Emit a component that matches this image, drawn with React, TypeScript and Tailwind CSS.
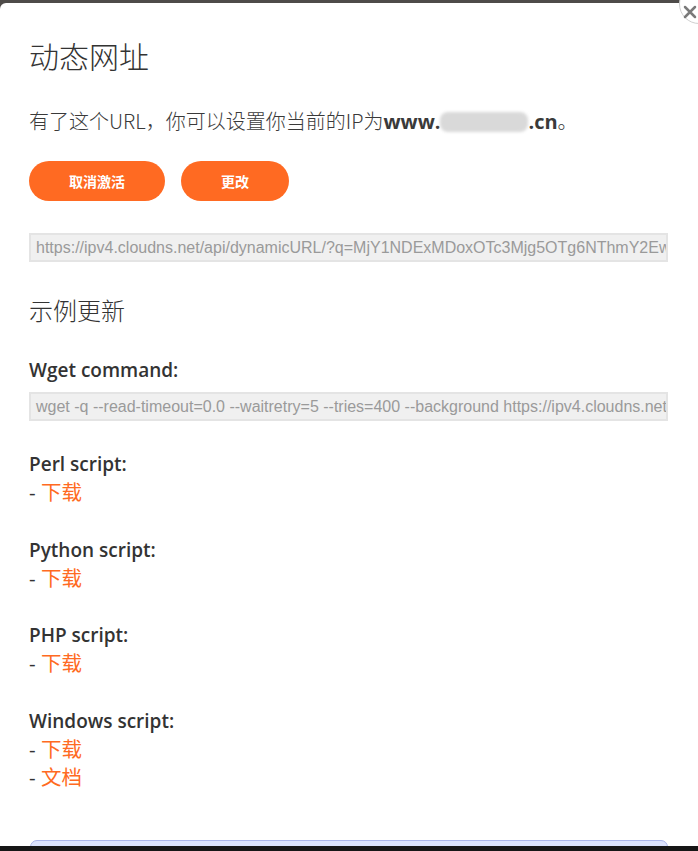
import React from "react";

const font = { fontFamily: '"Open Sans", "Noto Sans CJK SC", sans-serif' };

function Item({ label, links }: { label: string; links: string[] }) {
  return (
    <div className="mt-[29px]">
      <div className="text-[19px] leading-[28px] font-semibold text-[#333]">{label}</div>
      {links.map((l) => (
        <div key={l} className="text-[20.5px] leading-[27.5px] text-[#333]">
          - <span className="text-[#ff6a22]" style={{ fontFamily: '"Noto Sans CJK SC", sans-serif' }}>{l}</span>
        </div>
      ))}
    </div>
  );
}

export default function App() {
  return (
    <div className="relative h-[851px] w-[698px] overflow-hidden bg-[#4e4b49]" style={font}>
      <div className="mt-[3px] h-[843px] overflow-hidden rounded-tl-[6px] bg-white pl-[29px] pr-[30px] pt-[34px]">
        <h1 className="text-[30px] leading-[36px] text-[#333] font-light" style={{ fontFamily: '"Noto Sans CJK SC", sans-serif' }}>
          动态网址
        </h1>
        <p className="mt-[34px] text-[20px] leading-[28px] text-[#3a3a3a] font-light" style={{ fontFamily: '"Noto Sans CJK SC", sans-serif' }}>
          有了这个URL，你可以设置你当前的IP为
          <span className="font-bold" style={{ fontFamily: '"Open Sans", sans-serif' }}>www.</span>
          <span className="inline-block h-[20px] w-[88px] translate-y-[3px] rounded-[8px] bg-[#d9d9d9] blur-[1.5px]" />
          <span className="font-bold" style={{ fontFamily: '"Open Sans", sans-serif' }}>.cn</span>。
        </p>
        <div className="mt-[25px] flex gap-[16px]">
          <button className="h-[40px] w-[136px] rounded-full bg-[#ff6a22] text-[14px] font-bold text-white" style={{ fontFamily: '"Noto Sans CJK SC", sans-serif' }}>
            取消激活
          </button>
          <button className="h-[40px] w-[108px] rounded-full bg-[#ff6a22] text-[14px] font-bold text-white" style={{ fontFamily: '"Noto Sans CJK SC", sans-serif' }}>
            更改
          </button>
        </div>
        <div
          className="mt-[32px] h-[29px] overflow-hidden whitespace-nowrap border-2 border-[#e4e4e4] bg-[#f0f0f0] pl-[5px] text-[16px] leading-[25px] text-[#9a9a9a]"
          style={{ fontFamily: '"Liberation Sans", Arial, sans-serif' }}
        >
          https://ipv4.cloudns.net/api/dynamicURL/?q=MjY1NDExMDoxOTc3Mjg5OTg6NThmY2EwYjQ5
        </div>
        <h2 className="mt-[33px] text-[24px] leading-[30px] text-[#333] font-light" style={{ fontFamily: '"Noto Sans CJK SC", sans-serif' }}>
          示例更新
        </h2>
        <div className="mt-[32px] text-[19px] leading-[26px] font-semibold text-[#333]">Wget command:</div>
        <div
          className="mt-[9px] h-[29px] overflow-hidden whitespace-nowrap border-2 border-[#e4e4e4] bg-[#f0f0f0] pl-[5px] text-[16px] leading-[25px] text-[#9a9a9a]"
          style={{ fontFamily: '"Liberation Sans", Arial, sans-serif' }}
        >
          wget -q --read-timeout=0.0 --waitretry=5 --tries=400 --background https://ipv4.cloudns.net/api/dynamicURL/
        </div>
        <div className="mt-[1px]">
          <Item label="Perl script:" links={["下载"]} />
          <Item label="Python script:" links={["下载"]} />
          <Item label="PHP script:" links={["下载"]} />
          <Item label="Windows script:" links={["下载", "文档"]} />
        </div>
        <div className="mt-[48px] ml-[1px] h-[40px] rounded-[7px] border border-[#aab5ea] bg-[#dce3fd]" />
      </div>
      <div className="h-[5px] bg-[#161616]" />
      <div className="absolute right-[-21px] top-[-16px] flex h-[40px] w-[40px] items-center justify-center rounded-full border border-[#cfcfcf] bg-white">
        <svg width="16" height="16" viewBox="0 0 16 16" className="-translate-x-[9px] translate-y-[8px]">
          <path d="M3 3 L13 13 M13 3 L3 13" stroke="#7a7a7a" strokeWidth="2.5" strokeLinecap="round" />
        </svg>
      </div>
    </div>
  );
}
